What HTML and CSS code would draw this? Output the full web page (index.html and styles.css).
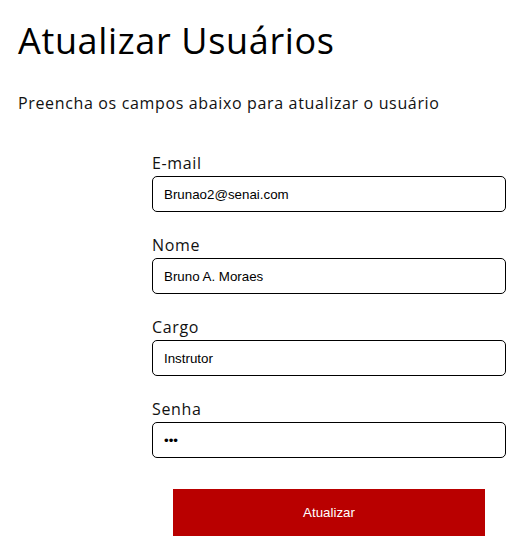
FILE: index.html
```html
<!DOCTYPE html>
<html lang="pt-BR">
<head>
<meta charset="utf-8">
<title>Atualizar Usuários</title>
<link rel="stylesheet" href="styles.css">
</head>
<body>
<main class="page">
  <h1 class="title">Atualizar Usuários</h1>
  <p class="subtitle">Preencha os campos abaixo para atualizar o usuário</p>
  <form class="form">
    <div class="field">
      <label class="label" for="email">E-mail</label>
      <input class="input" id="email" type="text" value="Brunao2@senai.com">
    </div>
    <div class="field">
      <label class="label" for="nome">Nome</label>
      <input class="input" id="nome" type="text" value="Bruno A. Moraes">
    </div>
    <div class="field">
      <label class="label" for="cargo">Cargo</label>
      <input class="input" id="cargo" type="text" value="Instrutor">
    </div>
    <div class="field">
      <label class="label" for="senha">Senha</label>
      <input class="input" id="senha" type="password" value="123">
    </div>
    <button class="button" type="button">Atualizar</button>
  </form>
</main>
</body>
</html>
```
FILE: styles.css
```css
* { box-sizing: border-box; }
html, body { margin: 0; padding: 0; background: #fff; }
body { font-family: "Open Sans", "Noto Sans", sans-serif; color: #000; }
.page { padding: 0 18px; }
.title {
  margin: 19px 0 0;
  font-size: 36px;
  line-height: 44px;
  font-weight: 400;
  letter-spacing: 0.65px;
}
.subtitle {
  margin: 28px 0 0;
  font-size: 16px;
  line-height: 24px;
  color: #111;
  letter-spacing: 0.65px;
}
.form {
  margin: 36px 0 0 134px;
  width: 354px;
  display: flex;
  flex-direction: column;
  gap: 21px;
}
.field { display: flex; flex-direction: column; gap: 1px; }
.label { font-size: 16px; line-height: 24px; color: #111; letter-spacing: 0.65px; }
.input {
  height: 36px;
  border: 1px solid #000;
  border-radius: 5px;
  padding: 0 11px;
  font-family: "Liberation Sans", Arial, sans-serif;
  font-size: 13.33px;
  color: #000;
  outline: none;
}
.button {
  margin: 10px auto 0;
  width: 312px;
  height: 47px;
  border: 0;
  background: #b90000;
  color: #fff;
  font-family: "Liberation Sans", Arial, sans-serif;
  font-size: 13.33px;
}
```
